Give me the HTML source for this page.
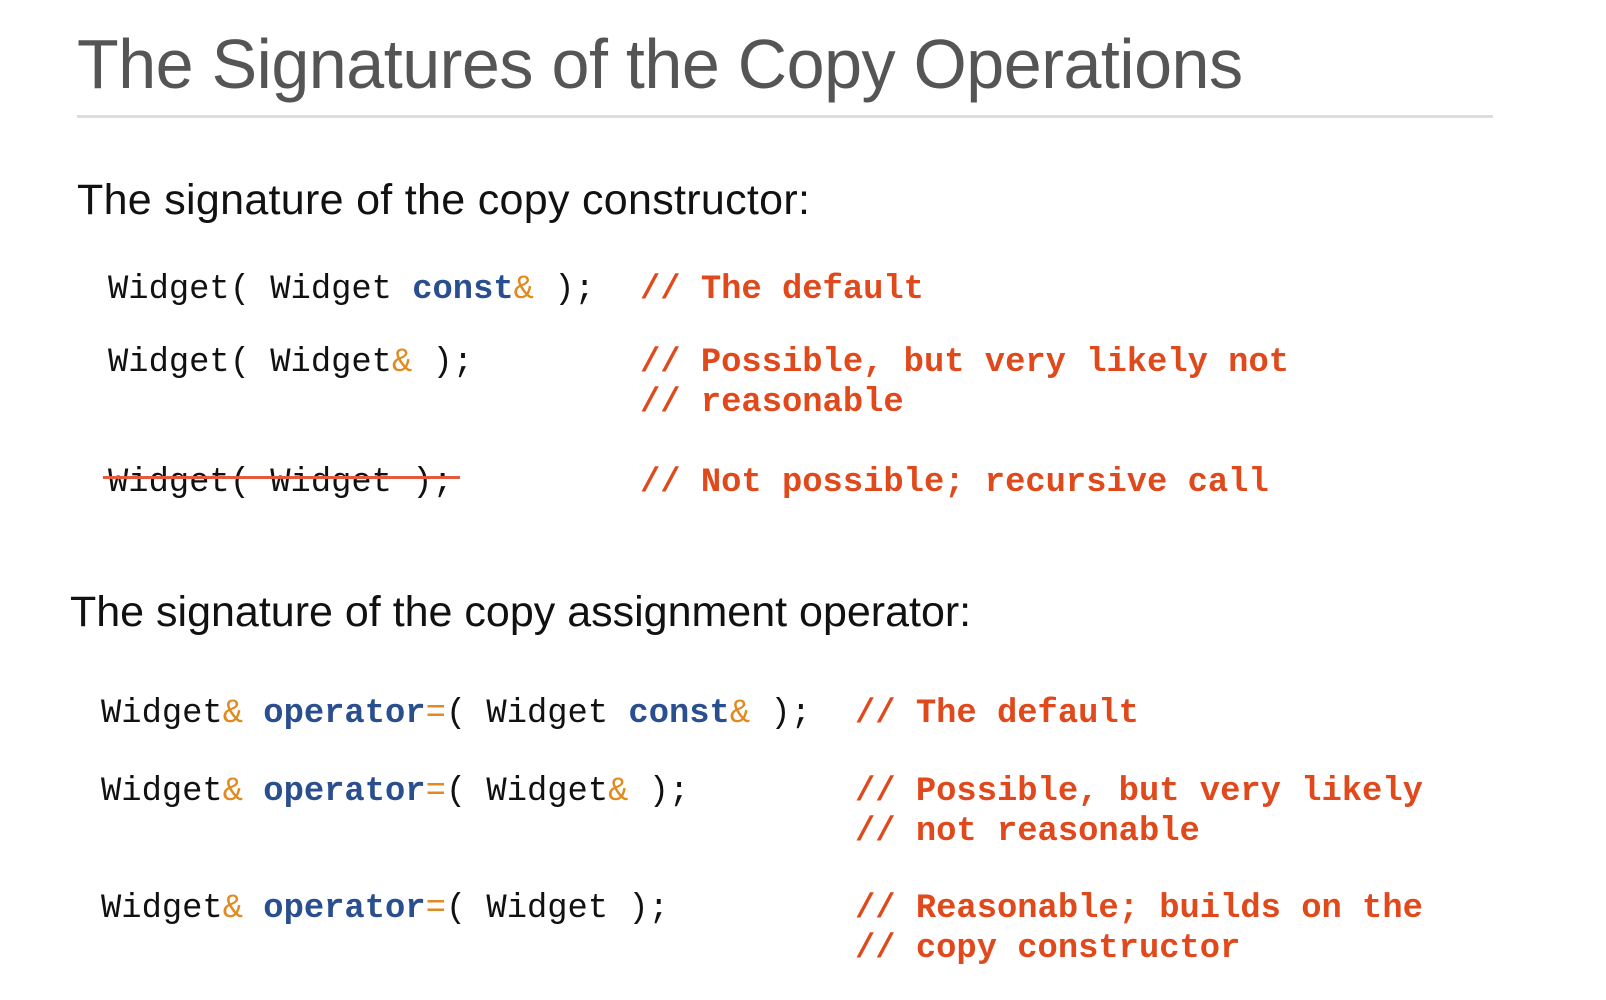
<!DOCTYPE html>
<html><head><meta charset="utf-8"><style>
html,body{margin:0;padding:0;background:#fff;width:1606px;height:1000px;overflow:hidden;position:relative}
.t{position:absolute;left:77px;top:24px;font-family:"Liberation Sans",sans-serif;font-size:70px;color:#555;white-space:nowrap;letter-spacing:-0.5px;transform:scaleX(0.975);transform-origin:0 0}
.hr{position:absolute;left:77px;top:115px;width:1416px;height:3px;background:#ddd}
.h{position:absolute;font-family:"Liberation Sans",sans-serif;font-size:43px;color:#111;white-space:nowrap}
.c{position:absolute;font-family:"Liberation Mono",monospace;font-size:33.8px;color:#111;white-space:pre;line-height:40px}
.m{position:absolute;font-family:"Liberation Mono",monospace;font-size:33.8px;font-weight:bold;color:#e0491c;white-space:pre;line-height:40px}
.b{color:#2a4f8f;font-weight:bold}
.o{color:#e08a20}
.s{position:absolute;left:103px;top:476px;width:357px;height:3px;background:#e55a3c}
</style></head><body>
<div class="t">The Signatures of the Copy Operations</div>
<div class="hr"></div>
<div class="h" style="left:77px;top:176px;letter-spacing:0.3px">The signature of the copy constructor:</div>
<div class="c" style="left:108px;top:270px">Widget( Widget <span class="b">const</span><span class="o">&amp;</span> );</div>
<div class="m" style="left:640px;top:270px">// The default</div>
<div class="c" style="left:108px;top:343px">Widget( Widget<span class="o">&amp;</span> );</div>
<div class="m" style="left:640px;top:343px">// Possible, but very likely not
// reasonable</div>
<div class="c" style="left:108px;top:463px">Widget( Widget );</div>
<div class="s"></div>
<div class="m" style="left:640px;top:463px">// Not possible; recursive call</div>
<div class="h" style="left:70px;top:588px">The signature of the copy assignment operator:</div>
<div class="c" style="left:101px;top:694px">Widget<span class="o">&amp;</span> <span class="b">operator</span><span class="o">=</span>( Widget <span class="b">const</span><span class="o">&amp;</span> );</div>
<div class="m" style="left:855px;top:694px">// The default</div>
<div class="c" style="left:101px;top:772px">Widget<span class="o">&amp;</span> <span class="b">operator</span><span class="o">=</span>( Widget<span class="o">&amp;</span> );</div>
<div class="m" style="left:855px;top:772px">// Possible, but very likely
// not reasonable</div>
<div class="c" style="left:101px;top:889px">Widget<span class="o">&amp;</span> <span class="b">operator</span><span class="o">=</span>( Widget );</div>
<div class="m" style="left:855px;top:889px">// Reasonable; builds on the
// copy constructor</div>
</body></html>
